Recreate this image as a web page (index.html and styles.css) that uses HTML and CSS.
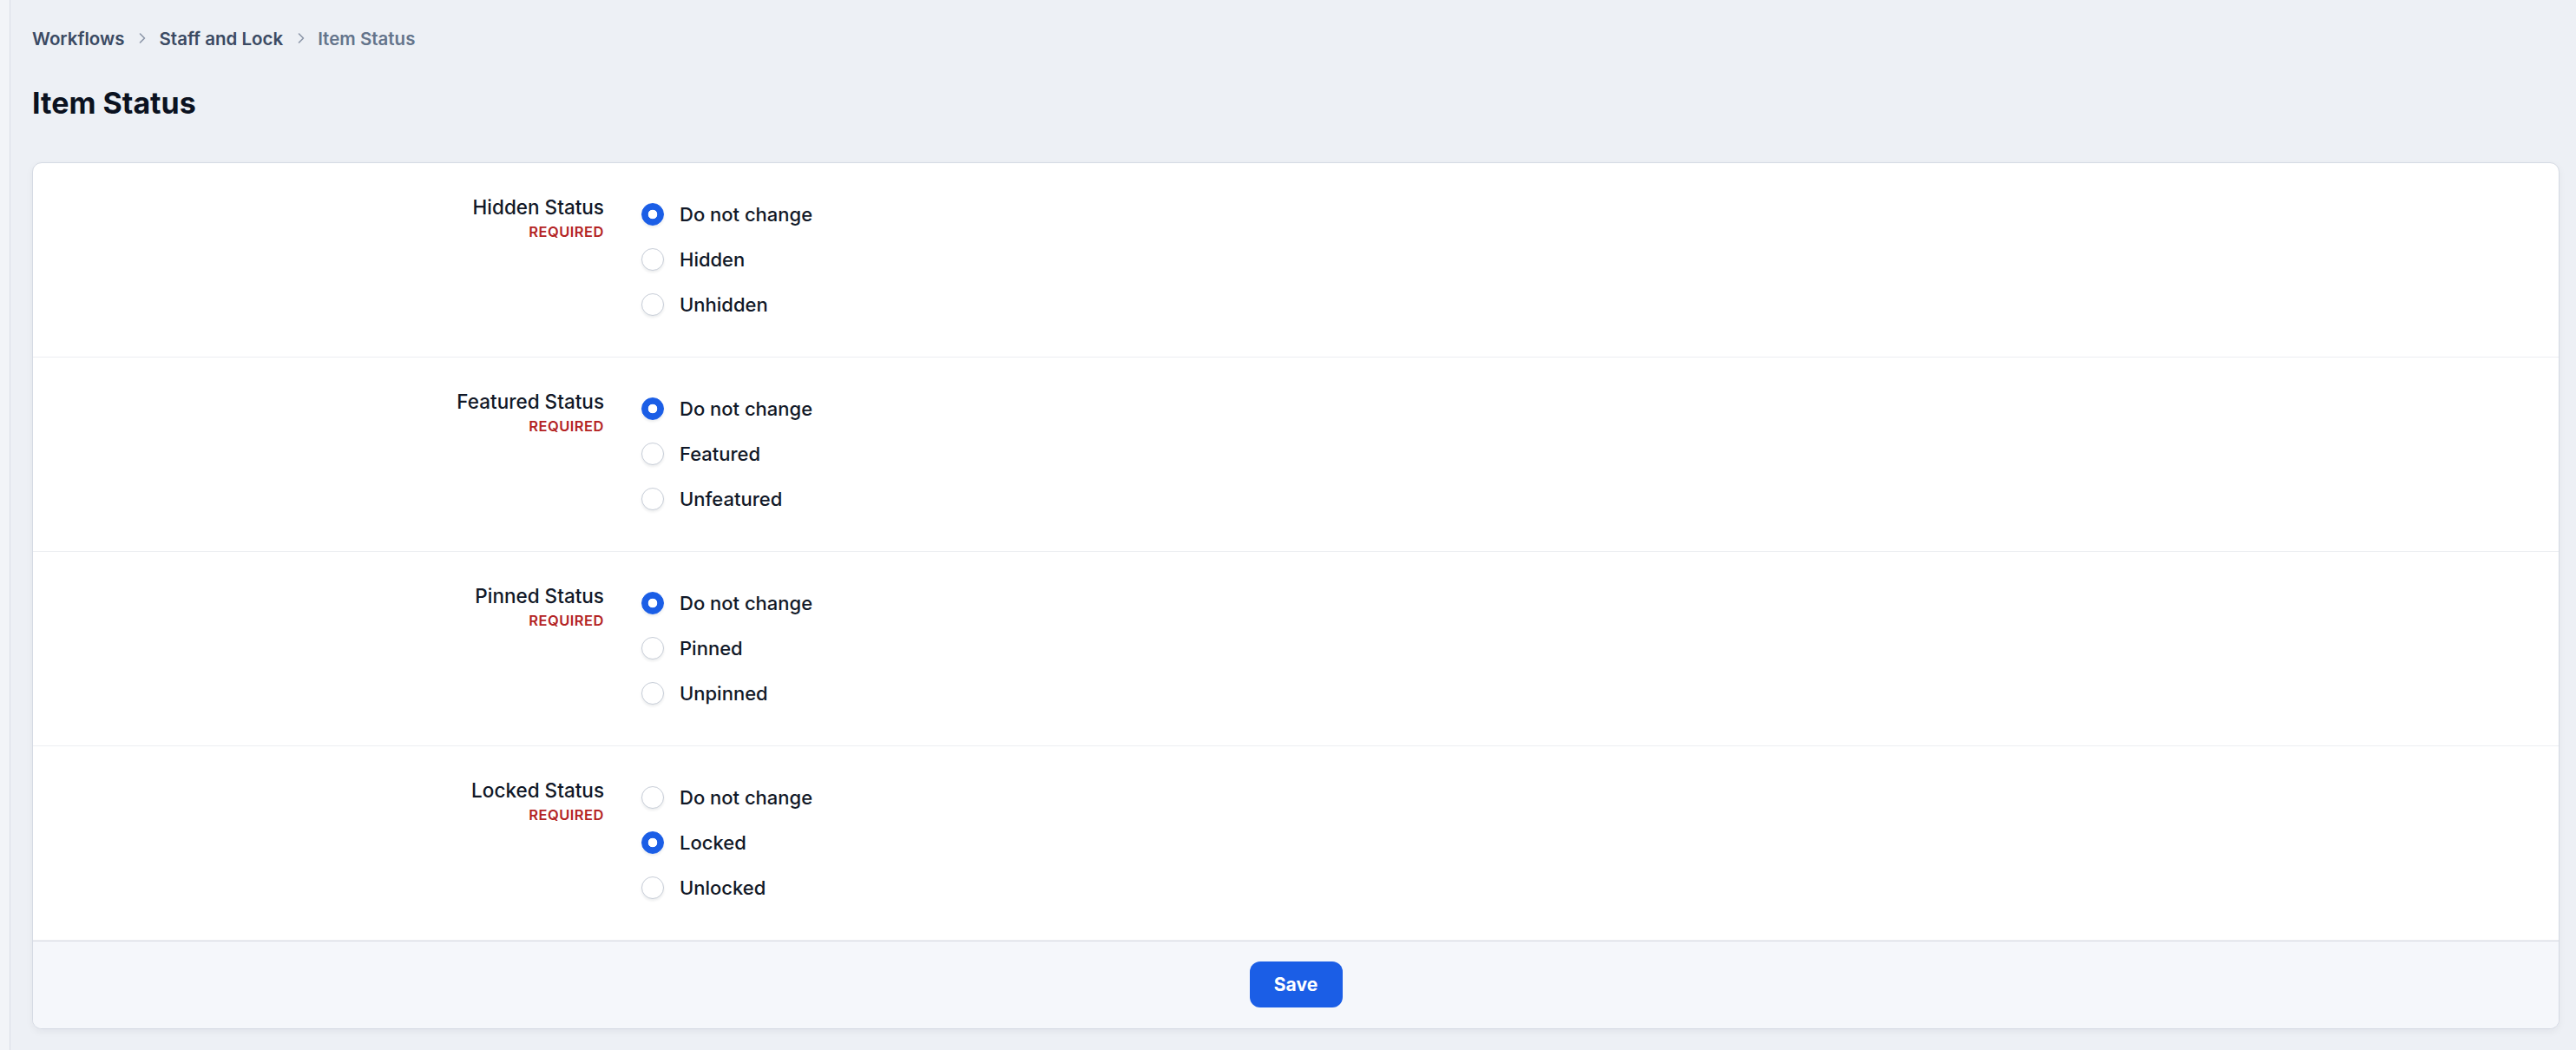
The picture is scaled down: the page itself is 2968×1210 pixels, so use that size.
FILE: index.html
```html
<!DOCTYPE html>
<html lang="en">
<head>
    <meta charset="UTF-8">
    <title>Item Status</title>
    <link rel="stylesheet" href="styles.css">
</head>
<body>
    <div class="app">
        <div class="sidebar-edge"></div>
        <main class="main">
            <nav class="breadcrumb">
                <a class="crumb">Workflows</a>
                <svg class="chevron" viewBox="0 0 20 20"><path d="M7.5 5l5 5-5 5"/></svg>
                <a class="crumb">Staff and Lock</a>
                <svg class="chevron" viewBox="0 0 20 20"><path d="M7.5 5l5 5-5 5"/></svg>
                <span class="crumb current">Item Status</span>
            </nav>

            <h1 class="page-title">Item Status</h1>

            <form class="card">
                <div class="field">
                    <div class="field-label">
                        <div class="label-text">Hidden Status</div>
                        <div class="required">Required</div>
                    </div>
                    <div class="options">
                        <label class="option"><input type="radio" name="hidden" checked> Do not change</label>
                        <label class="option"><input type="radio" name="hidden"> Hidden</label>
                        <label class="option"><input type="radio" name="hidden"> Unhidden</label>
                    </div>
                </div>

                <div class="field">
                    <div class="field-label">
                        <div class="label-text">Featured Status</div>
                        <div class="required">Required</div>
                    </div>
                    <div class="options">
                        <label class="option"><input type="radio" name="featured" checked> Do not change</label>
                        <label class="option"><input type="radio" name="featured"> Featured</label>
                        <label class="option"><input type="radio" name="featured"> Unfeatured</label>
                    </div>
                </div>

                <div class="field">
                    <div class="field-label">
                        <div class="label-text">Pinned Status</div>
                        <div class="required">Required</div>
                    </div>
                    <div class="options">
                        <label class="option"><input type="radio" name="pinned" checked> Do not change</label>
                        <label class="option"><input type="radio" name="pinned"> Pinned</label>
                        <label class="option"><input type="radio" name="pinned"> Unpinned</label>
                    </div>
                </div>

                <div class="field">
                    <div class="field-label">
                        <div class="label-text">Locked Status</div>
                        <div class="required">Required</div>
                    </div>
                    <div class="options">
                        <label class="option"><input type="radio" name="locked"> Do not change</label>
                        <label class="option"><input type="radio" name="locked" checked> Locked</label>
                        <label class="option"><input type="radio" name="locked"> Unlocked</label>
                    </div>
                </div>

                <div class="card-footer">
                    <button type="button" class="save-button">Save</button>
                </div>
            </form>
        </main>
    </div>
</body>
</html>
```

FILE: styles.css
```css
body {
    font-family: Inter, "Noto Sans", sans-serif;
    background-color: #edf0f5;
    color: #111827;
    margin: 0;
    padding: 0;
}

.app {
    display: flex;
    min-height: 1210px;
}

/* thin edge of the collapsed side panel */
.sidebar-edge {
    width: 11px;
    background-color: #f2f4f8;
    border-right: 1px solid #d9dde5;
}

.main {
    flex: 1;
    padding: 30px 19px 24px 25px;
}

.breadcrumb {
    display: flex;
    align-items: center;
    height: 28px;
    font-size: 20.5px;
    font-weight: 600;
}

.crumb {
    color: #3b4a63;
}

.crumb.current {
    color: #64748b;
}

.chevron {
    width: 20px;
    height: 20px;
    margin: 0 9px 0 11px;
    fill: none;
    stroke: #8c96a8;
    stroke-width: 1.6;
    stroke-linecap: round;
    stroke-linejoin: round;
}

.page-title {
    font-size: 34px;
    line-height: 44px;
    font-weight: 700;
    color: #0b1220;
    margin: 39px 0 46px 0;
}

.card {
    background-color: #fff;
    border: 1px solid #d5dae3;
    border-radius: 11px;
    box-shadow: 0 3px 8px rgba(15, 23, 42, 0.05);
    overflow: hidden;
}

.field {
    display: grid;
    grid-template-columns: 658px 1fr;
    column-gap: 43px;
    padding: 33px 0 34px 0;
    border-bottom: 1px solid #eceef2;
}

.field:last-of-type {
    border-bottom: none;
}

.field-label {
    text-align: right;
    padding-top: 5px;
}

.label-text {
    font-size: 22.5px;
    line-height: 26px;
    font-weight: 500;
    color: #111827;
}

.required {
    font-size: 16.5px;
    line-height: 24px;
    margin-top: 3px;
    font-weight: 600;
    text-transform: uppercase;
    letter-spacing: 0.03em;
    color: #b42323;
}

.options {
    display: flex;
    flex-direction: column;
}

.option {
    display: flex;
    align-items: center;
    height: 52px;
    gap: 18px;
    font-size: 22px;
    font-weight: 500;
    color: #111827;
}

.option input {
    appearance: none;
    -webkit-appearance: none;
    margin: 0;
    width: 26px;
    height: 26px;
    border: 1.5px solid #c8ced8;
    border-radius: 50%;
    background-color: #fff;
    box-shadow: 0 2px 3px rgba(15, 23, 42, 0.08);
}

.option input:checked {
    border-color: #1b5ee6;
    background: radial-gradient(circle, #fff 0 5px, #1b5ee6 5.6px);
}

.card-footer {
    display: flex;
    justify-content: center;
    padding: 23px 0 24px 0;
    background-color: #f5f7fb;
    border-top: 1px solid #dcdfe6;
}

.save-button {
    width: 107px;
    height: 53px;
    font-family: Inter, "Noto Sans", sans-serif;
    font-size: 21px;
    font-weight: 700;
    color: #fff;
    background-color: #1b5ee6;
    border: none;
    border-radius: 12px;
    cursor: pointer;
}
```
